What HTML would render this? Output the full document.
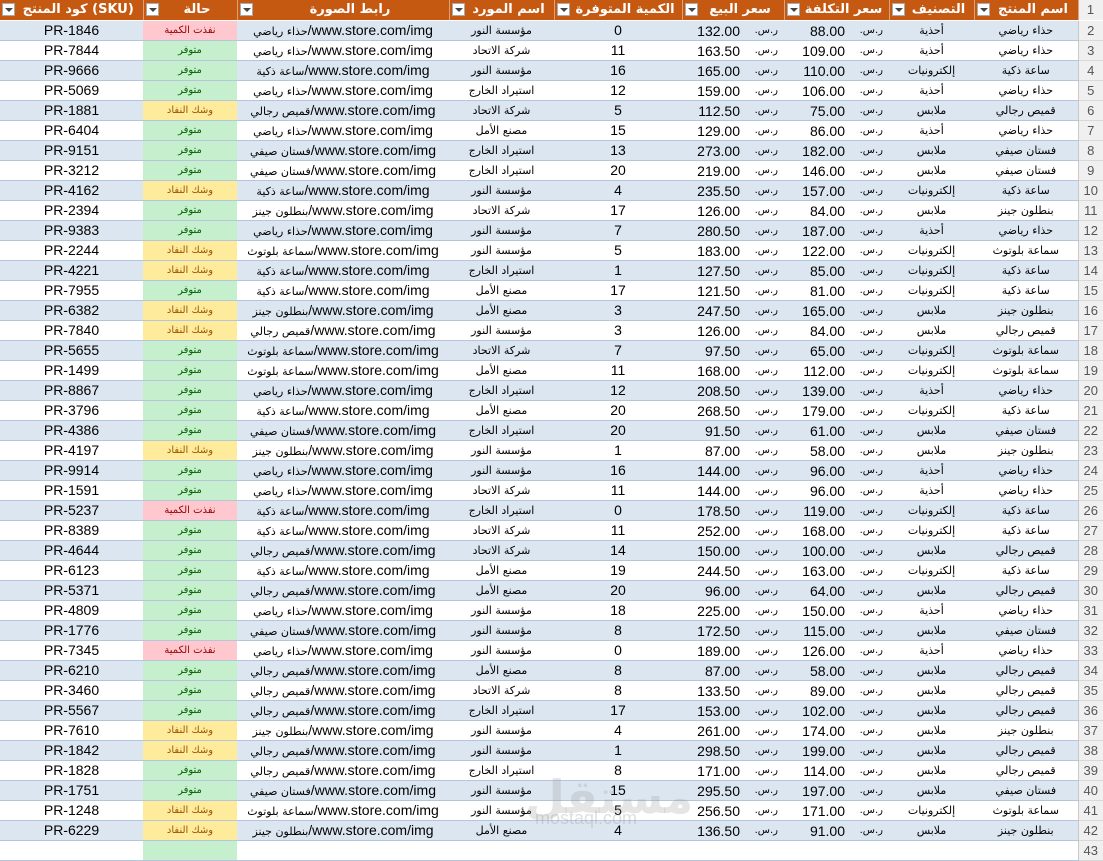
<!DOCTYPE html>
<html><head><meta charset="utf-8">
<style>
*{margin:0;padding:0;box-sizing:border-box}
body{width:1103px;height:845px;overflow:hidden;background:#fff;font-family:"Liberation Sans",Arial,sans-serif;position:relative}
table{border-collapse:collapse;table-layout:fixed;width:1103px}
td{height:20px;border-bottom:1px solid #b4c6de;white-space:nowrap;overflow:hidden;text-align:center;font-size:14px;color:#000;position:relative;padding:0}
tr:nth-child(even) td{background:#dce6f1}
tr:nth-child(odd) td{background:#fff}
tr.h td{background:#c65911 !important;color:#fff;font-weight:bold;font-size:13px;font-family:"DejaVu Sans",sans-serif;border-bottom:1px solid #fff;border-right:1px solid #d9a27a}
tr.h td.n{background:#f0f0f0 !important;color:#555;font-weight:normal;font-family:"Liberation Sans",sans-serif;font-size:13px}
tr.h td span.dd{position:absolute;left:2px;top:3px;width:13px;height:13px;background:#fff;border:1px solid #aaa}
tr.h td span.dd:after{content:"";position:absolute;left:2px;top:4px;border-left:4px solid transparent;border-right:4px solid transparent;border-top:4px solid #444}
tr.h td span.t{display:block;padding-left:14px}
td.n{background:#f0f0f0 !important;color:#555;font-size:13px;border-left:1px solid #c8c8c8;border-bottom:1px solid #d8d8d8}
.a{font-family:"DejaVu Sans",sans-serif;font-size:11px}
td.m b{font-weight:normal;position:absolute;right:44px;top:2px}
td.m i{font-style:normal;position:absolute;right:6px;top:4px;font-family:"DejaVu Sans",sans-serif;font-size:10px}
td.r{background:#ffc7ce !important;color:#9c0006}
td.g{background:#c6efce !important;color:#006100}
td.y{background:#ffeb9c !important;color:#9c5700}
td.s{font-family:"DejaVu Sans",sans-serif;font-size:10px}
.l span{font-family:"DejaVu Sans",sans-serif;font-size:11px}
.wm{position:absolute;left:525px;top:770px;color:rgba(150,150,150,0.25);font-size:46px;font-weight:bold;font-family:"DejaVu Sans",sans-serif}
.wm2{position:absolute;left:535px;top:808px;color:rgba(150,150,150,0.3);font-size:18px}
</style></head><body>
<table>
<colgroup><col style="width:143px"><col style="width:94px"><col style="width:212px"><col style="width:105px"><col style="width:128px"><col style="width:102px"><col style="width:105px"><col style="width:85px"><col style="width:104px"><col style="width:25px"></colgroup>
<tbody>
<tr class="h"><td><span class="dd"></span><span class="t" dir="ltr"><span dir="rtl">كود المنتج</span> (SKU)</span></td><td><span class="dd"></span><span class="t">حالة</span></td><td><span class="dd"></span><span class="t">رابط الصورة</span></td><td><span class="dd"></span><span class="t">اسم المورد</span></td><td><span class="dd"></span><span class="t">الكمية المتوفرة</span></td><td><span class="dd"></span><span class="t">سعر البيع</span></td><td><span class="dd"></span><span class="t">سعر التكلفة</span></td><td><span class="dd"></span><span class="t">التصنيف</span></td><td><span class="dd"></span><span class="t">اسم المنتج</span></td><td class="n">1</td></tr>
<tr><td>PR-1846</td><td class="s r">نفذت الكمية</td><td class="l" dir="ltr"><span dir="rtl">حذاء رياضي</span>/www.store.com/img</td><td class="a">مؤسسة النور</td><td>0</td><td class="m"><b>132.00</b><i dir="rtl">ر.س.</i></td><td class="m"><b>88.00</b><i dir="rtl">ر.س.</i></td><td class="a">أحذية</td><td class="a">حذاء رياضي</td><td class="n">2</td></tr>
<tr><td>PR-7844</td><td class="s g">متوفر</td><td class="l" dir="ltr"><span dir="rtl">حذاء رياضي</span>/www.store.com/img</td><td class="a">شركة الاتحاد</td><td>11</td><td class="m"><b>163.50</b><i dir="rtl">ر.س.</i></td><td class="m"><b>109.00</b><i dir="rtl">ر.س.</i></td><td class="a">أحذية</td><td class="a">حذاء رياضي</td><td class="n">3</td></tr>
<tr><td>PR-9666</td><td class="s g">متوفر</td><td class="l" dir="ltr"><span dir="rtl">ساعة ذكية</span>/www.store.com/img</td><td class="a">مؤسسة النور</td><td>16</td><td class="m"><b>165.00</b><i dir="rtl">ر.س.</i></td><td class="m"><b>110.00</b><i dir="rtl">ر.س.</i></td><td class="a">إلكترونيات</td><td class="a">ساعة ذكية</td><td class="n">4</td></tr>
<tr><td>PR-5069</td><td class="s g">متوفر</td><td class="l" dir="ltr"><span dir="rtl">حذاء رياضي</span>/www.store.com/img</td><td class="a">استيراد الخارج</td><td>12</td><td class="m"><b>159.00</b><i dir="rtl">ر.س.</i></td><td class="m"><b>106.00</b><i dir="rtl">ر.س.</i></td><td class="a">أحذية</td><td class="a">حذاء رياضي</td><td class="n">5</td></tr>
<tr><td>PR-1881</td><td class="s y">وشك النفاد</td><td class="l" dir="ltr"><span dir="rtl">قميص رجالي</span>/www.store.com/img</td><td class="a">شركة الاتحاد</td><td>5</td><td class="m"><b>112.50</b><i dir="rtl">ر.س.</i></td><td class="m"><b>75.00</b><i dir="rtl">ر.س.</i></td><td class="a">ملابس</td><td class="a">قميص رجالي</td><td class="n">6</td></tr>
<tr><td>PR-6404</td><td class="s g">متوفر</td><td class="l" dir="ltr"><span dir="rtl">حذاء رياضي</span>/www.store.com/img</td><td class="a">مصنع الأمل</td><td>15</td><td class="m"><b>129.00</b><i dir="rtl">ر.س.</i></td><td class="m"><b>86.00</b><i dir="rtl">ر.س.</i></td><td class="a">أحذية</td><td class="a">حذاء رياضي</td><td class="n">7</td></tr>
<tr><td>PR-9151</td><td class="s g">متوفر</td><td class="l" dir="ltr"><span dir="rtl">فستان صيفي</span>/www.store.com/img</td><td class="a">استيراد الخارج</td><td>13</td><td class="m"><b>273.00</b><i dir="rtl">ر.س.</i></td><td class="m"><b>182.00</b><i dir="rtl">ر.س.</i></td><td class="a">ملابس</td><td class="a">فستان صيفي</td><td class="n">8</td></tr>
<tr><td>PR-3212</td><td class="s g">متوفر</td><td class="l" dir="ltr"><span dir="rtl">فستان صيفي</span>/www.store.com/img</td><td class="a">استيراد الخارج</td><td>20</td><td class="m"><b>219.00</b><i dir="rtl">ر.س.</i></td><td class="m"><b>146.00</b><i dir="rtl">ر.س.</i></td><td class="a">ملابس</td><td class="a">فستان صيفي</td><td class="n">9</td></tr>
<tr><td>PR-4162</td><td class="s y">وشك النفاد</td><td class="l" dir="ltr"><span dir="rtl">ساعة ذكية</span>/www.store.com/img</td><td class="a">مؤسسة النور</td><td>4</td><td class="m"><b>235.50</b><i dir="rtl">ر.س.</i></td><td class="m"><b>157.00</b><i dir="rtl">ر.س.</i></td><td class="a">إلكترونيات</td><td class="a">ساعة ذكية</td><td class="n">10</td></tr>
<tr><td>PR-2394</td><td class="s g">متوفر</td><td class="l" dir="ltr"><span dir="rtl">بنطلون جينز</span>/www.store.com/img</td><td class="a">شركة الاتحاد</td><td>17</td><td class="m"><b>126.00</b><i dir="rtl">ر.س.</i></td><td class="m"><b>84.00</b><i dir="rtl">ر.س.</i></td><td class="a">ملابس</td><td class="a">بنطلون جينز</td><td class="n">11</td></tr>
<tr><td>PR-9383</td><td class="s g">متوفر</td><td class="l" dir="ltr"><span dir="rtl">حذاء رياضي</span>/www.store.com/img</td><td class="a">مؤسسة النور</td><td>7</td><td class="m"><b>280.50</b><i dir="rtl">ر.س.</i></td><td class="m"><b>187.00</b><i dir="rtl">ر.س.</i></td><td class="a">أحذية</td><td class="a">حذاء رياضي</td><td class="n">12</td></tr>
<tr><td>PR-2244</td><td class="s y">وشك النفاد</td><td class="l" dir="ltr"><span dir="rtl">سماعة بلوتوث</span>/www.store.com/img</td><td class="a">مؤسسة النور</td><td>5</td><td class="m"><b>183.00</b><i dir="rtl">ر.س.</i></td><td class="m"><b>122.00</b><i dir="rtl">ر.س.</i></td><td class="a">إلكترونيات</td><td class="a">سماعة بلوتوث</td><td class="n">13</td></tr>
<tr><td>PR-4221</td><td class="s y">وشك النفاد</td><td class="l" dir="ltr"><span dir="rtl">ساعة ذكية</span>/www.store.com/img</td><td class="a">استيراد الخارج</td><td>1</td><td class="m"><b>127.50</b><i dir="rtl">ر.س.</i></td><td class="m"><b>85.00</b><i dir="rtl">ر.س.</i></td><td class="a">إلكترونيات</td><td class="a">ساعة ذكية</td><td class="n">14</td></tr>
<tr><td>PR-7955</td><td class="s g">متوفر</td><td class="l" dir="ltr"><span dir="rtl">ساعة ذكية</span>/www.store.com/img</td><td class="a">مصنع الأمل</td><td>17</td><td class="m"><b>121.50</b><i dir="rtl">ر.س.</i></td><td class="m"><b>81.00</b><i dir="rtl">ر.س.</i></td><td class="a">إلكترونيات</td><td class="a">ساعة ذكية</td><td class="n">15</td></tr>
<tr><td>PR-6382</td><td class="s y">وشك النفاد</td><td class="l" dir="ltr"><span dir="rtl">بنطلون جينز</span>/www.store.com/img</td><td class="a">مصنع الأمل</td><td>3</td><td class="m"><b>247.50</b><i dir="rtl">ر.س.</i></td><td class="m"><b>165.00</b><i dir="rtl">ر.س.</i></td><td class="a">ملابس</td><td class="a">بنطلون جينز</td><td class="n">16</td></tr>
<tr><td>PR-7840</td><td class="s y">وشك النفاد</td><td class="l" dir="ltr"><span dir="rtl">قميص رجالي</span>/www.store.com/img</td><td class="a">مؤسسة النور</td><td>3</td><td class="m"><b>126.00</b><i dir="rtl">ر.س.</i></td><td class="m"><b>84.00</b><i dir="rtl">ر.س.</i></td><td class="a">ملابس</td><td class="a">قميص رجالي</td><td class="n">17</td></tr>
<tr><td>PR-5655</td><td class="s g">متوفر</td><td class="l" dir="ltr"><span dir="rtl">سماعة بلوتوث</span>/www.store.com/img</td><td class="a">شركة الاتحاد</td><td>7</td><td class="m"><b>97.50</b><i dir="rtl">ر.س.</i></td><td class="m"><b>65.00</b><i dir="rtl">ر.س.</i></td><td class="a">إلكترونيات</td><td class="a">سماعة بلوتوث</td><td class="n">18</td></tr>
<tr><td>PR-1499</td><td class="s g">متوفر</td><td class="l" dir="ltr"><span dir="rtl">سماعة بلوتوث</span>/www.store.com/img</td><td class="a">مصنع الأمل</td><td>11</td><td class="m"><b>168.00</b><i dir="rtl">ر.س.</i></td><td class="m"><b>112.00</b><i dir="rtl">ر.س.</i></td><td class="a">إلكترونيات</td><td class="a">سماعة بلوتوث</td><td class="n">19</td></tr>
<tr><td>PR-8867</td><td class="s g">متوفر</td><td class="l" dir="ltr"><span dir="rtl">حذاء رياضي</span>/www.store.com/img</td><td class="a">استيراد الخارج</td><td>12</td><td class="m"><b>208.50</b><i dir="rtl">ر.س.</i></td><td class="m"><b>139.00</b><i dir="rtl">ر.س.</i></td><td class="a">أحذية</td><td class="a">حذاء رياضي</td><td class="n">20</td></tr>
<tr><td>PR-3796</td><td class="s g">متوفر</td><td class="l" dir="ltr"><span dir="rtl">ساعة ذكية</span>/www.store.com/img</td><td class="a">مصنع الأمل</td><td>20</td><td class="m"><b>268.50</b><i dir="rtl">ر.س.</i></td><td class="m"><b>179.00</b><i dir="rtl">ر.س.</i></td><td class="a">إلكترونيات</td><td class="a">ساعة ذكية</td><td class="n">21</td></tr>
<tr><td>PR-4386</td><td class="s g">متوفر</td><td class="l" dir="ltr"><span dir="rtl">فستان صيفي</span>/www.store.com/img</td><td class="a">استيراد الخارج</td><td>20</td><td class="m"><b>91.50</b><i dir="rtl">ر.س.</i></td><td class="m"><b>61.00</b><i dir="rtl">ر.س.</i></td><td class="a">ملابس</td><td class="a">فستان صيفي</td><td class="n">22</td></tr>
<tr><td>PR-4197</td><td class="s y">وشك النفاد</td><td class="l" dir="ltr"><span dir="rtl">بنطلون جينز</span>/www.store.com/img</td><td class="a">مؤسسة النور</td><td>1</td><td class="m"><b>87.00</b><i dir="rtl">ر.س.</i></td><td class="m"><b>58.00</b><i dir="rtl">ر.س.</i></td><td class="a">ملابس</td><td class="a">بنطلون جينز</td><td class="n">23</td></tr>
<tr><td>PR-9914</td><td class="s g">متوفر</td><td class="l" dir="ltr"><span dir="rtl">حذاء رياضي</span>/www.store.com/img</td><td class="a">مؤسسة النور</td><td>16</td><td class="m"><b>144.00</b><i dir="rtl">ر.س.</i></td><td class="m"><b>96.00</b><i dir="rtl">ر.س.</i></td><td class="a">أحذية</td><td class="a">حذاء رياضي</td><td class="n">24</td></tr>
<tr><td>PR-1591</td><td class="s g">متوفر</td><td class="l" dir="ltr"><span dir="rtl">حذاء رياضي</span>/www.store.com/img</td><td class="a">شركة الاتحاد</td><td>11</td><td class="m"><b>144.00</b><i dir="rtl">ر.س.</i></td><td class="m"><b>96.00</b><i dir="rtl">ر.س.</i></td><td class="a">أحذية</td><td class="a">حذاء رياضي</td><td class="n">25</td></tr>
<tr><td>PR-5237</td><td class="s r">نفذت الكمية</td><td class="l" dir="ltr"><span dir="rtl">ساعة ذكية</span>/www.store.com/img</td><td class="a">استيراد الخارج</td><td>0</td><td class="m"><b>178.50</b><i dir="rtl">ر.س.</i></td><td class="m"><b>119.00</b><i dir="rtl">ر.س.</i></td><td class="a">إلكترونيات</td><td class="a">ساعة ذكية</td><td class="n">26</td></tr>
<tr><td>PR-8389</td><td class="s g">متوفر</td><td class="l" dir="ltr"><span dir="rtl">ساعة ذكية</span>/www.store.com/img</td><td class="a">شركة الاتحاد</td><td>11</td><td class="m"><b>252.00</b><i dir="rtl">ر.س.</i></td><td class="m"><b>168.00</b><i dir="rtl">ر.س.</i></td><td class="a">إلكترونيات</td><td class="a">ساعة ذكية</td><td class="n">27</td></tr>
<tr><td>PR-4644</td><td class="s g">متوفر</td><td class="l" dir="ltr"><span dir="rtl">قميص رجالي</span>/www.store.com/img</td><td class="a">شركة الاتحاد</td><td>14</td><td class="m"><b>150.00</b><i dir="rtl">ر.س.</i></td><td class="m"><b>100.00</b><i dir="rtl">ر.س.</i></td><td class="a">ملابس</td><td class="a">قميص رجالي</td><td class="n">28</td></tr>
<tr><td>PR-6123</td><td class="s g">متوفر</td><td class="l" dir="ltr"><span dir="rtl">ساعة ذكية</span>/www.store.com/img</td><td class="a">مصنع الأمل</td><td>19</td><td class="m"><b>244.50</b><i dir="rtl">ر.س.</i></td><td class="m"><b>163.00</b><i dir="rtl">ر.س.</i></td><td class="a">إلكترونيات</td><td class="a">ساعة ذكية</td><td class="n">29</td></tr>
<tr><td>PR-5371</td><td class="s g">متوفر</td><td class="l" dir="ltr"><span dir="rtl">قميص رجالي</span>/www.store.com/img</td><td class="a">مصنع الأمل</td><td>20</td><td class="m"><b>96.00</b><i dir="rtl">ر.س.</i></td><td class="m"><b>64.00</b><i dir="rtl">ر.س.</i></td><td class="a">ملابس</td><td class="a">قميص رجالي</td><td class="n">30</td></tr>
<tr><td>PR-4809</td><td class="s g">متوفر</td><td class="l" dir="ltr"><span dir="rtl">حذاء رياضي</span>/www.store.com/img</td><td class="a">مؤسسة النور</td><td>18</td><td class="m"><b>225.00</b><i dir="rtl">ر.س.</i></td><td class="m"><b>150.00</b><i dir="rtl">ر.س.</i></td><td class="a">أحذية</td><td class="a">حذاء رياضي</td><td class="n">31</td></tr>
<tr><td>PR-1776</td><td class="s g">متوفر</td><td class="l" dir="ltr"><span dir="rtl">فستان صيفي</span>/www.store.com/img</td><td class="a">مؤسسة النور</td><td>8</td><td class="m"><b>172.50</b><i dir="rtl">ر.س.</i></td><td class="m"><b>115.00</b><i dir="rtl">ر.س.</i></td><td class="a">ملابس</td><td class="a">فستان صيفي</td><td class="n">32</td></tr>
<tr><td>PR-7345</td><td class="s r">نفذت الكمية</td><td class="l" dir="ltr"><span dir="rtl">حذاء رياضي</span>/www.store.com/img</td><td class="a">مؤسسة النور</td><td>0</td><td class="m"><b>189.00</b><i dir="rtl">ر.س.</i></td><td class="m"><b>126.00</b><i dir="rtl">ر.س.</i></td><td class="a">أحذية</td><td class="a">حذاء رياضي</td><td class="n">33</td></tr>
<tr><td>PR-6210</td><td class="s g">متوفر</td><td class="l" dir="ltr"><span dir="rtl">قميص رجالي</span>/www.store.com/img</td><td class="a">مصنع الأمل</td><td>8</td><td class="m"><b>87.00</b><i dir="rtl">ر.س.</i></td><td class="m"><b>58.00</b><i dir="rtl">ر.س.</i></td><td class="a">ملابس</td><td class="a">قميص رجالي</td><td class="n">34</td></tr>
<tr><td>PR-3460</td><td class="s g">متوفر</td><td class="l" dir="ltr"><span dir="rtl">قميص رجالي</span>/www.store.com/img</td><td class="a">شركة الاتحاد</td><td>8</td><td class="m"><b>133.50</b><i dir="rtl">ر.س.</i></td><td class="m"><b>89.00</b><i dir="rtl">ر.س.</i></td><td class="a">ملابس</td><td class="a">قميص رجالي</td><td class="n">35</td></tr>
<tr><td>PR-5567</td><td class="s g">متوفر</td><td class="l" dir="ltr"><span dir="rtl">قميص رجالي</span>/www.store.com/img</td><td class="a">استيراد الخارج</td><td>17</td><td class="m"><b>153.00</b><i dir="rtl">ر.س.</i></td><td class="m"><b>102.00</b><i dir="rtl">ر.س.</i></td><td class="a">ملابس</td><td class="a">قميص رجالي</td><td class="n">36</td></tr>
<tr><td>PR-7610</td><td class="s y">وشك النفاد</td><td class="l" dir="ltr"><span dir="rtl">بنطلون جينز</span>/www.store.com/img</td><td class="a">مؤسسة النور</td><td>4</td><td class="m"><b>261.00</b><i dir="rtl">ر.س.</i></td><td class="m"><b>174.00</b><i dir="rtl">ر.س.</i></td><td class="a">ملابس</td><td class="a">بنطلون جينز</td><td class="n">37</td></tr>
<tr><td>PR-1842</td><td class="s y">وشك النفاد</td><td class="l" dir="ltr"><span dir="rtl">قميص رجالي</span>/www.store.com/img</td><td class="a">مؤسسة النور</td><td>1</td><td class="m"><b>298.50</b><i dir="rtl">ر.س.</i></td><td class="m"><b>199.00</b><i dir="rtl">ر.س.</i></td><td class="a">ملابس</td><td class="a">قميص رجالي</td><td class="n">38</td></tr>
<tr><td>PR-1828</td><td class="s g">متوفر</td><td class="l" dir="ltr"><span dir="rtl">قميص رجالي</span>/www.store.com/img</td><td class="a">استيراد الخارج</td><td>8</td><td class="m"><b>171.00</b><i dir="rtl">ر.س.</i></td><td class="m"><b>114.00</b><i dir="rtl">ر.س.</i></td><td class="a">ملابس</td><td class="a">قميص رجالي</td><td class="n">39</td></tr>
<tr><td>PR-1751</td><td class="s g">متوفر</td><td class="l" dir="ltr"><span dir="rtl">فستان صيفي</span>/www.store.com/img</td><td class="a">مؤسسة النور</td><td>15</td><td class="m"><b>295.50</b><i dir="rtl">ر.س.</i></td><td class="m"><b>197.00</b><i dir="rtl">ر.س.</i></td><td class="a">ملابس</td><td class="a">فستان صيفي</td><td class="n">40</td></tr>
<tr><td>PR-1248</td><td class="s y">وشك النفاد</td><td class="l" dir="ltr"><span dir="rtl">سماعة بلوتوث</span>/www.store.com/img</td><td class="a">مؤسسة النور</td><td>5</td><td class="m"><b>256.50</b><i dir="rtl">ر.س.</i></td><td class="m"><b>171.00</b><i dir="rtl">ر.س.</i></td><td class="a">إلكترونيات</td><td class="a">سماعة بلوتوث</td><td class="n">41</td></tr>
<tr><td>PR-6229</td><td class="s y">وشك النفاد</td><td class="l" dir="ltr"><span dir="rtl">بنطلون جينز</span>/www.store.com/img</td><td class="a">مصنع الأمل</td><td>4</td><td class="m"><b>136.50</b><i dir="rtl">ر.س.</i></td><td class="m"><b>91.00</b><i dir="rtl">ر.س.</i></td><td class="a">ملابس</td><td class="a">بنطلون جينز</td><td class="n">42</td></tr>
<tr><td></td><td class="s g"></td><td></td><td></td><td></td><td></td><td></td><td></td><td></td><td class="n">43</td></tr>
</tbody></table>
<div class="wm">مستقل</div>
<div class="wm2">mostaql.com</div>
</body></html>
